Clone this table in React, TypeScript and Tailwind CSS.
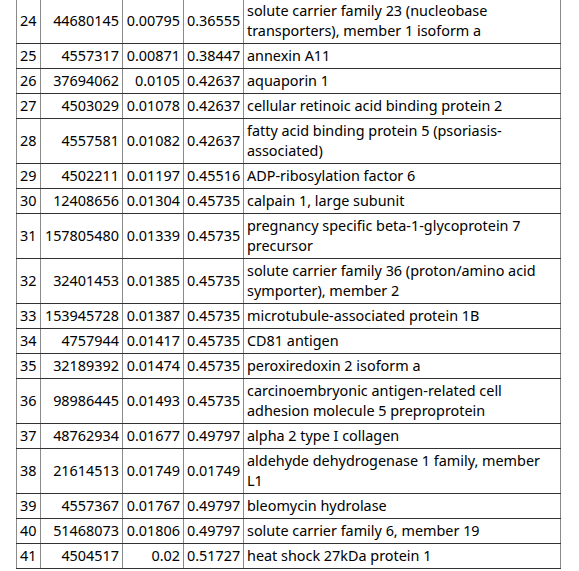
const rows: [string, string, string, string, string][] = [
  ["24", "44680145", "0.00795", "0.36555", "solute carrier family 23 (nucleobase transporters), member 1 isoform a"],
  ["25", "4557317", "0.00871", "0.38447", "annexin A11"],
  ["26", "37694062", "0.0105", "0.42637", "aquaporin 1"],
  ["27", "4503029", "0.01078", "0.42637", "cellular retinoic acid binding protein 2"],
  ["28", "4557581", "0.01082", "0.42637", "fatty acid binding protein 5 (psoriasis-associated)"],
  ["29", "4502211", "0.01197", "0.45516", "ADP-ribosylation factor 6"],
  ["30", "12408656", "0.01304", "0.45735", "calpain 1, large subunit"],
  ["31", "157805480", "0.01339", "0.45735", "pregnancy specific beta-1-glycoprotein 7 precursor"],
  ["32", "32401453", "0.01385", "0.45735", "solute carrier family 36 (proton/amino acid symporter), member 2"],
  ["33", "153945728", "0.01387", "0.45735", "microtubule-associated protein 1B"],
  ["34", "4757944", "0.01417", "0.45735", "CD81 antigen"],
  ["35", "32189392", "0.01474", "0.45735", "peroxiredoxin 2 isoform a"],
  ["36", "98986445", "0.01493", "0.45735", "carcinoembryonic antigen-related cell adhesion molecule 5 preproprotein"],
  ["37", "48762934", "0.01677", "0.49797", "alpha 2 type I collagen"],
  ["38", "21614513", "0.01749", "0.01749", "aldehyde dehydrogenase 1 family, member L1"],
  ["39", "4557367", "0.01767", "0.49797", "bleomycin hydrolase"],
  ["40", "51468073", "0.01806", "0.49797", "solute carrier family 6, member 19"],
  ["41", "4504517", "0.02", "0.51727", "heat shock 27kDa protein 1"],
];

const cell = "border-x border-x-[#8a8a8a] border-y border-y-[#333] px-[3px] py-0 align-middle leading-[20px]";

export default function App() {
  return (
    <div className="min-h-screen bg-white pl-4 text-black text-[14.4px] font-['Noto_Sans',sans-serif] overflow-hidden">
      <table className="-mt-[2px] table-fixed border-collapse w-[545px] border border-[#8a8a8a]">
        <colgroup>
          <col className="w-[24px]" />
          <col className="w-[82px]" />
          <col className="w-[61px]" />
          <col className="w-[60px]" />
          <col />
        </colgroup>
        <tbody>
          {rows.map((r) => (
            <tr key={r[0]} className={r[4].length > 41 ? "h-[45px]" : "h-[25px]"}>
              <td className={cell}>{r[0]}</td>
              <td className={`${cell} text-right`}>{r[1]}</td>
              <td className={`${cell} text-right`}>{r[2]}</td>
              <td className={`${cell} text-right`}>{r[3]}</td>
              <td className={cell}>{r[4]}</td>
            </tr>
          ))}
        </tbody>
      </table>
    </div>
  );
}
